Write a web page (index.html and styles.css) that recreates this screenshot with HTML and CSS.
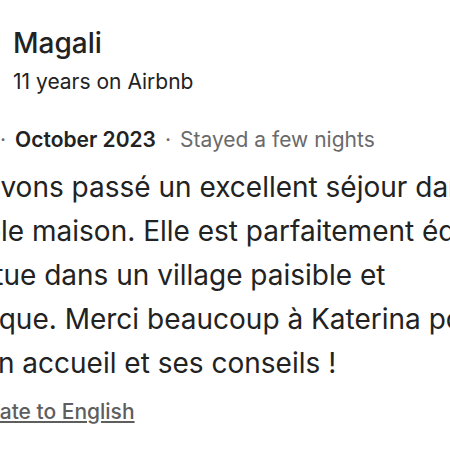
FILE: index.html
```html
<!DOCTYPE html>
<html lang="fr">
<head>
    <meta charset="UTF-8">
    <meta name="viewport" content="width=device-width, initial-scale=1.0">
    <title>Magali - Review</title>
    <link rel="stylesheet" href="styles.css">
</head>
<body>
    <div class="review">
        <div class="reviewer">
            <div class="avatar"></div>
            <div class="reviewer-info">
                <div class="name">Magali</div>
                <div class="years">11 years on Airbnb</div>
            </div>
        </div>
        <div class="meta">
            <span class="stars">
                <svg viewBox="0 0 32 32"><path d="M16 2.5l4.1 8.9 9.7 1.1-7.2 6.6 2 9.6L16 23.8l-8.6 4.9 2-9.6-7.2-6.6 9.7-1.1z"/></svg>
                <svg viewBox="0 0 32 32"><path d="M16 2.5l4.1 8.9 9.7 1.1-7.2 6.6 2 9.6L16 23.8l-8.6 4.9 2-9.6-7.2-6.6 9.7-1.1z"/></svg>
                <svg viewBox="0 0 32 32"><path d="M16 2.5l4.1 8.9 9.7 1.1-7.2 6.6 2 9.6L16 23.8l-8.6 4.9 2-9.6-7.2-6.6 9.7-1.1z"/></svg>
                <svg viewBox="0 0 32 32"><path d="M16 2.5l4.1 8.9 9.7 1.1-7.2 6.6 2 9.6L16 23.8l-8.6 4.9 2-9.6-7.2-6.6 9.7-1.1z"/></svg>
                <svg viewBox="0 0 32 32"><path d="M16 2.5l4.1 8.9 9.7 1.1-7.2 6.6 2 9.6L16 23.8l-8.6 4.9 2-9.6-7.2-6.6 9.7-1.1z"/></svg>
            </span>
            <span class="dot">·</span>
            <span class="date">October 2023</span>
            <span class="dot">·</span>
            <span class="stay">Stayed a few nights</span>
        </div>
        <p class="text">Nous avons passé un excellent séjour dans une<br>adorable maison. Elle est parfaitement équipée et<br>bien situe dans un village paisible et<br>touristique. Merci beaucoup à Katerina pour<br>son bon accueil et ses conseils !</p>
        <a class="translate" href="#">Translate to English</a>
    </div>
</body>
</html>
```

FILE: styles.css
```css
body {
    margin: 0;
    background: #fff;
    color: #222;
    font-family: Inter, "Liberation Sans", sans-serif;
    overflow: hidden;
}
.review {
    margin-left: -92px;
    padding-top: 25px;
}
.reviewer {
    display: flex;
    align-items: center;
    gap: 41px;
}
.avatar {
    width: 64px;
    height: 64px;
    border-radius: 50%;
    background: #ddd;
    flex-shrink: 0;
}
.name {
    font-size: 28px;
    line-height: 36px;
    font-weight: 500;
}
.years {
    margin-top: 7px;
    font-size: 21px;
    line-height: 28px;
}
.meta {
    margin-top: 30px;
    display: flex;
    align-items: center;
    font-size: 21px;
    line-height: 28px;
    white-space: nowrap;
}
.stars {
    display: flex;
    gap: 2px;
}
.stars svg {
    width: 15px;
    height: 15px;
    fill: #222;
}
.dot {
    margin: 0 9px;
    color: #6a6a6a;
}
.date {
    font-weight: 600;
}
.stay {
    color: #6a6a6a;
}
.text {
    margin: 11px 0 0;
    font-size: 28px;
    line-height: 44px;
    white-space: nowrap;
}
.translate {
    display: block;
    width: max-content;
    margin: 13px 0 0 30px;
    font-size: 21px;
    line-height: 28px;
    font-weight: 500;
    color: #5e5e5e;
}
```
